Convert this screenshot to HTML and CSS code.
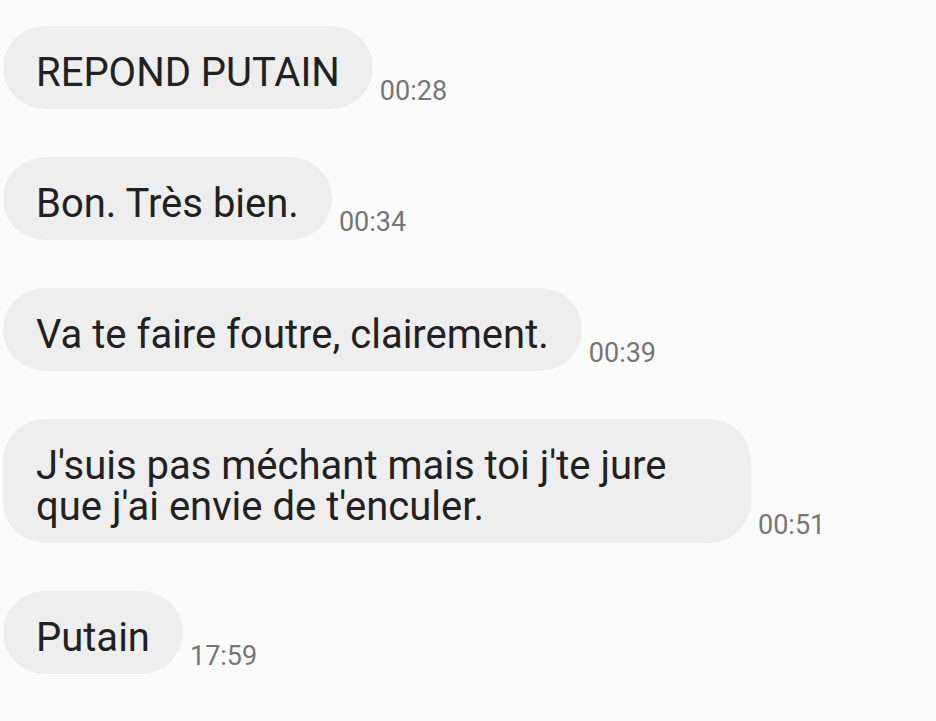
FILE: index.html
```html
<!DOCTYPE html>
<html lang="fr">
<head>
<meta charset="utf-8">
<title>Messages</title>
<link rel="stylesheet" href="styles.css">
</head>
<body>
<main class="thread">
  <div class="row">
    <div class="bubble">REPOND PUTAIN</div>
    <span class="time">00:28</span>
  </div>
  <div class="row">
    <div class="bubble">Bon. Très bien.</div>
    <span class="time">00:34</span>
  </div>
  <div class="row">
    <div class="bubble">Va te faire foutre, clairement.</div>
    <span class="time">00:39</span>
  </div>
  <div class="row">
    <div class="bubble">J'suis pas méchant mais toi j'te jure que j'ai envie de t'enculer.</div>
    <span class="time">00:51</span>
  </div>
  <div class="row">
    <div class="bubble">Putain</div>
    <span class="time">17:59</span>
  </div>
</main>
</body>
</html>
```
FILE: styles.css
```css
html, body {
  margin: 0;
  padding: 0;
  background: #fbfbfb;
}
body {
  font-family: Roboto, "Noto Sans", "Liberation Sans", sans-serif;
  color: #212121;
}
.thread {
  display: flex;
  flex-direction: column;
  gap: 48px;
  padding: 26px 0 0 3px;
}
.row {
  display: flex;
  align-items: flex-end;
  gap: 7px;
}
.bubble {
  box-sizing: border-box;
  max-width: 748px;
  background: #eeeeee;
  border-radius: 42px;
  padding: 26px 33px 16px;
  font-size: 40px;
  line-height: 41px;
}
.time {
  flex: none;
  font-size: 27px;
  line-height: 27px;
  color: #767676;
  padding-bottom: 4px;
}
```
